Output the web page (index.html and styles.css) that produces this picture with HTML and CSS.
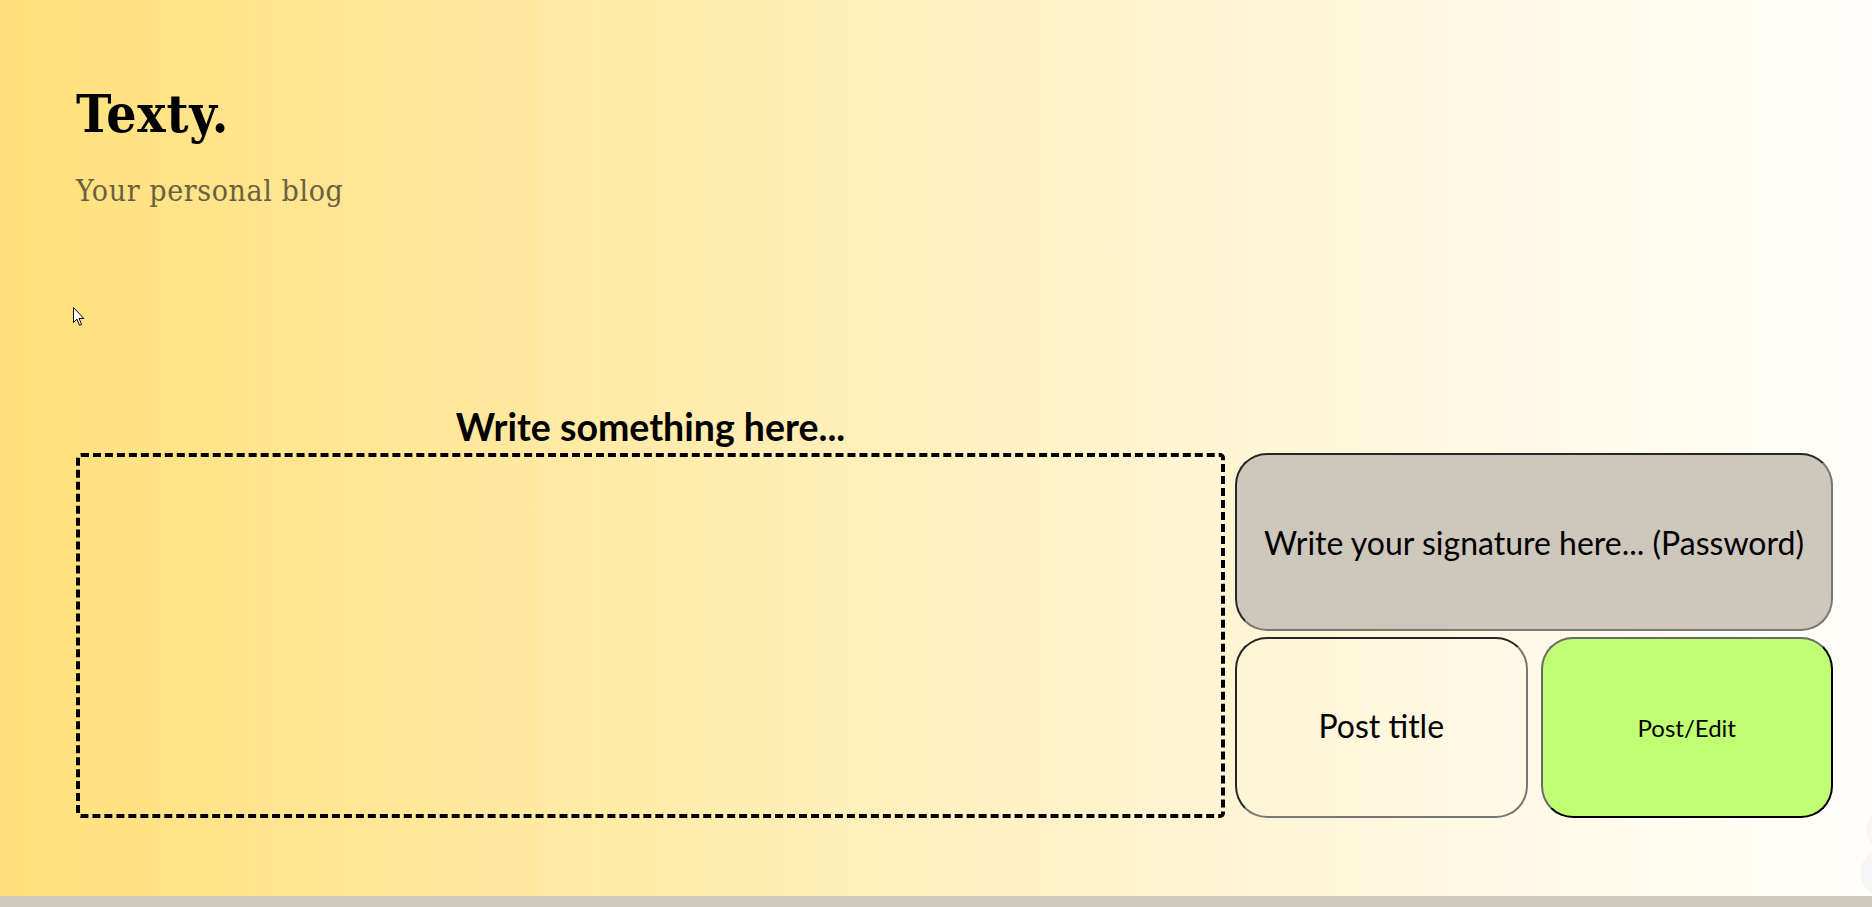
FILE: index.html
```html
<!DOCTYPE html>
<html lang="en">
<head>
<meta charset="utf-8">
<title>Texty.</title>
<link rel="stylesheet" href="styles.css">
</head>
<body>
<main class="page">
  <header class="masthead">
    <h1 class="logo">Texty.</h1>
    <p class="tagline">Your personal blog</p>
  </header>
  <section class="editor">
    <h2 class="editor-heading">Write something here...</h2>
    <textarea class="editor-text" aria-label="Post body"></textarea>
    <div class="side">
      <div class="field signature">Write your signature here... (Password)</div>
      <div class="side-row">
        <div class="field title">Post title</div>
        <button class="post-btn" type="button">Post/Edit</button>
      </div>
    </div>
  </section>
  <svg class="cursor" width="12" height="20" viewBox="0 0 12 20" aria-hidden="true"><path d="M0.5 0.5 L0.5 15.5 L4 12.2 L6.6 18.3 L8.6 17.4 L6.1 11.5 L10.8 11.5 Z" fill="#fff" stroke="#000" stroke-width="1"/></svg>
  <span class="bubble bubble-a"></span>
  <span class="bubble bubble-b"></span>
</main>
<footer class="bottom-bar"></footer>
</body>
</html>
```
FILE: styles.css
```css
html, body {
  margin: 0;
  padding: 0;
}
body {
  font-family: Lato, "Liberation Sans", sans-serif;
  background: #cfc8bd;
  overflow: hidden;
}
.page {
  position: relative;
  height: 896px;
  box-sizing: border-box;
  padding: 83px 39px 0 76px;
  background: linear-gradient(to right, #ffe07a 0%, #fff4d0 62%, #fffefb 100%);
  overflow: hidden;
}
.masthead {
  display: flex;
  flex-direction: column;
  gap: 31px;
}
.logo {
  margin: 0;
  font-family: "DejaVu Serif Condensed", "DejaVu Serif", serif;
  font-weight: bold;
  font-size: 53px;
  line-height: 60px;
  letter-spacing: 0.8px;
  color: #000;
}
.tagline {
  margin: 0;
  font-family: "DejaVu Serif Condensed", "DejaVu Serif", serif;
  font-size: 30px;
  line-height: 34px;
  letter-spacing: 0.6px;
  color: #6a6040;
}
.editor {
  margin-top: 199px;
  display: grid;
  grid-template-columns: 1149px 598px;
  grid-template-rows: auto 365px;
  column-gap: 10px;
  row-gap: 6px;
}
.editor-heading {
  grid-column: 1;
  grid-row: 1;
  margin: 0;
  text-align: center;
  font-size: 37.5px;
  line-height: 40px;
  font-weight: bold;
}
.editor-text {
  grid-column: 1;
  grid-row: 2;
  box-sizing: border-box;
  width: 100%;
  height: 100%;
  margin: 0;
  border: 4px dashed #000;
  border-radius: 5px;
  background: transparent;
  resize: none;
  font-family: Lato, sans-serif;
  font-size: 20px;
}
.side {
  grid-column: 2;
  grid-row: 2;
  display: grid;
  grid-template-rows: 178px 181px;
  row-gap: 6px;
}
.side-row {
  display: grid;
  grid-template-columns: 1fr 1fr;
  column-gap: 13px;
}
.field {
  box-sizing: border-box;
  display: flex;
  align-items: center;
  justify-content: center;
  border-width: 2px;
  border-style: solid;
  border-color: #262626 #777 #777 #262626;
  border-radius: 32px;
  color: #000;
}
.signature {
  background: #cec7bc;
  font-size: 32px;
}
.title {
  background: transparent;
  font-size: 32px;
  padding-bottom: 5px;
}
.post-btn {
  box-sizing: border-box;
  margin: 0;
  border-width: 2px;
  border-style: solid;
  border-color: #6a6a6a #000 #000 #6a6a6a;
  border-radius: 32px;
  background: #c0ff74;
  font-family: Lato, sans-serif;
  font-size: 24px;
  color: #000;
}
.cursor {
  position: absolute;
  left: 73px;
  top: 307px;
}
.bubble {
  position: absolute;
  border-radius: 50%;
  background: #f7f7f9;
  box-shadow: 0 0 3px rgba(0, 0, 0, 0.12);
}
.bubble-a {
  left: 1868px;
  top: 810px;
  width: 40px;
  height: 40px;
}
.bubble-b {
  left: 1862px;
  top: 851px;
  width: 44px;
  height: 44px;
}
.bottom-bar {
  height: 11px;
  background: #cfc8bd;
}
```
